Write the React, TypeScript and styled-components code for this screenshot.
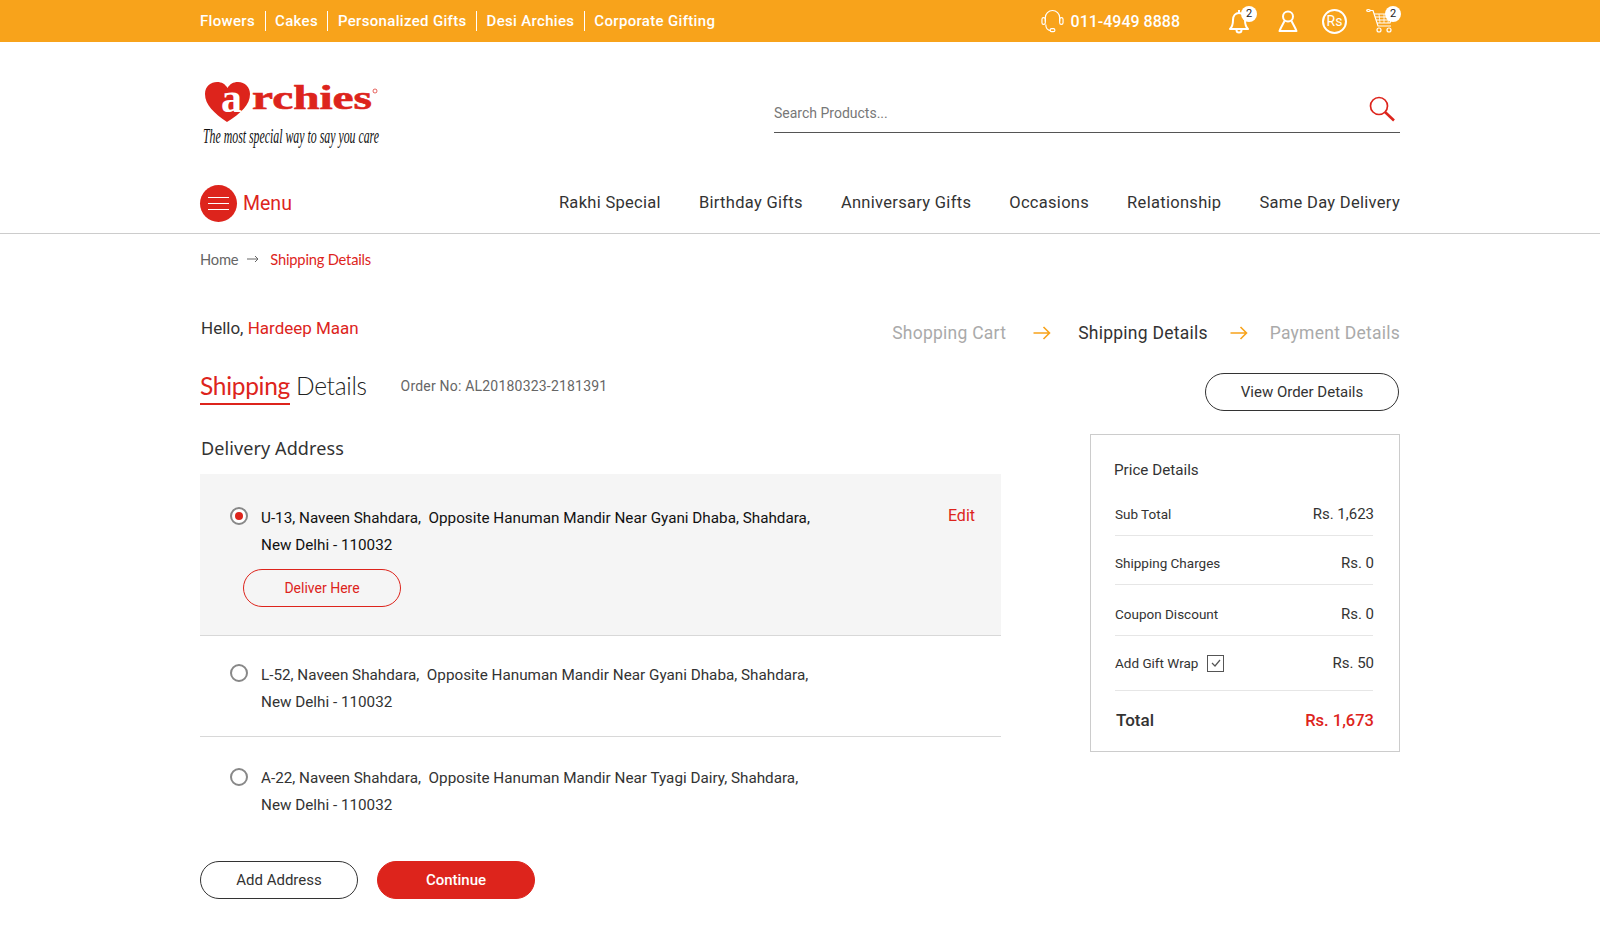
import styled, { createGlobalStyle } from "styled-components";

const red = "#dd241c";
const orange = "#f8a31b";
const dark = "#333333";
const bodyFont = `Roboto, "Noto Sans", sans-serif`;
const labelFont = `"Noto Sans", Roboto, sans-serif`;
const titleFont = `Lato, "Noto Sans", sans-serif`;

const GlobalStyle = createGlobalStyle`
  html, body {
    margin: 0;
    padding: 0;
    background: #fff;
    font-family: ${bodyFont};
    color: ${dark};
  }
  * { box-sizing: border-box; }
`;

const Wrap = styled.div`
  width: 1200px;
  margin: 0 auto;
`;

const TopBar = styled.div`
  height: 42px;
  background: ${orange};
  color: #fff;
`;

const TopInner = styled(Wrap)`
  height: 42px;
  display: flex;
  align-items: center;
`;

const TopLinks = styled.div`
  display: flex;
  align-items: center;
  flex: 1;
`;

const TopLink = styled.a`
  font-size: 15px;
  font-weight: 500;
  letter-spacing: 0.32px;
  line-height: 20px;
  padding: 0 9.500px;
  border-left: 1px solid #fff;
  &:first-child {
    padding-left: 0;
    border-left: 0;
  }
`;

const Phone = styled.div`
  display: flex;
  align-items: center;
  gap: 7px;
  font-size: 16px;
  font-weight: 500;
  margin-right: 48px;
`;

const TopIcons = styled.div`
  display: flex;
  align-items: center;
  margin-right: 6px;
`;

const IconSlot = styled.div<{ $width: number; $gap?: number }>`
  position: relative;
  width: ${(p) => p.$width}px;
  margin-left: ${(p) => p.$gap ?? 0}px;
  height: 28px;
  display: flex;
  align-items: center;
  justify-content: center;
`;

const Badge = styled.span`
  position: absolute;
  top: -1px;
  right: -7px;
  width: 16px;
  height: 16px;
  border-radius: 50%;
  background: #fff;
  color: #222;
  font-size: 11px;
  line-height: 16px;
  text-align: center;
`;

const RsCircle = styled.span`
  width: 25px;
  height: 25px;
  flex: none;
  border: 2px solid #fff;
  border-radius: 50%;
  font-size: 14px;
  line-height: 21px;
  text-align: center;
`;

const HeaderRow = styled(Wrap)`
  display: flex;
  justify-content: space-between;
  align-items: flex-start;
  padding-top: 38px;
  height: 143px;
`;

const LogoSvg = styled.svg`
  overflow: visible;
`;

const SearchBox = styled.div`
  width: 626px;
  height: 42px;
  margin-top: 11px;
  padding: 3px 5px 0 0;
  display: flex;
  align-items: center;
  justify-content: space-between;
  border-bottom: 1px solid #555;
  color: #777;
  font-size: 14px;
  & svg {
    margin-top: -8px;
  }
`;

const NavBorder = styled.div`
  border-bottom: 1px solid #ccc;
  height: 49px;
`;

const NavRow = styled(Wrap)`
  display: flex;
  align-items: flex-start;
  justify-content: space-between;
`;

const MenuButton = styled.div`
  display: flex;
  align-items: center;
  gap: 6px;
  color: ${red};
  font-size: 19.5px;
  font-weight: 400;
`;

const MenuCircle = styled.span`
  width: 37px;
  height: 37px;
  border-radius: 50%;
  background: ${red};
  display: flex;
  flex-direction: column;
  justify-content: center;
  align-items: center;
  gap: 5px;
  & i {
    display: block;
    width: 21px;
    height: 1px;
    background: #fff;
  }
`;

const NavLinks = styled.div`
  display: flex;
  gap: 38px;
  padding-top: 7px;
`;

const NavLink = styled.a`
  font-size: 16.5px;
  font-weight: 400;
  letter-spacing: 0.3px;
  line-height: 22px;
  color: ${dark};
`;

const Crumbs = styled(Wrap)`
  display: flex;
  align-items: center;
  gap: 9px;
  height: 50px;
  margin-bottom: 17px;
  font-family: ${titleFont};
  font-size: 14.7px;
  letter-spacing: -0.2px;
  color: #666;
`;

const CrumbCurrent = styled.span`
  color: ${red};
  margin-left: 2px;
`;

const GreetRow = styled(Wrap)`
  display: flex;
  justify-content: space-between;
  align-items: center;
  height: 58px;
  padding-left: 1px;
`;

const Hello = styled.div`
  font-size: 17px;
  line-height: 24px;
  margin-top: -4px;
  & b {
    font-weight: 400;
    color: ${red};
  }
`;

const Steps = styled.div`
  display: flex;
  align-items: center;
  font-size: 17.5px;
  letter-spacing: 0.25px;
  margin-top: 6px;
`;

const Step = styled.span<{ $active?: boolean }>`
  color: ${(p) => (p.$active ? dark : "#aaa")};
`;

const StepArrow = styled.span<{ $gap: number }>`
  display: flex;
  margin: 0 ${(p) => p.$gap}px;
`;

const TitleRow = styled(Wrap)`
  display: flex;
  align-items: center;
  height: 54px;
`;

const Title = styled.h1`
  margin: 0;
  font-family: ${titleFont};
  font-size: 24.5px;
  font-weight: 300;
  letter-spacing: -0.3px;
  color: #222;
  line-height: 35px;
  & b {
    display: inline-block;
    font-weight: 400;
    color: ${red};
    border-bottom: 2px solid ${red};
    margin-right: 6px;
  }
`;

const OrderNo = styled.span`
  margin-left: 34px;
  font-size: 14px;
  letter-spacing: 0.2px;
  color: #666;
  flex: 1;
`;

const PillButton = styled.button<{ $variant?: "red" | "solid" }>`
  width: 158px;
  height: 38px;
  border-radius: 19px;
  border: 1px solid ${(p) => (p.$variant ? red : dark)};
  background: ${(p) => (p.$variant === "solid" ? red : "transparent")};
  color: ${(p) =>
    p.$variant === "solid" ? "#fff" : p.$variant === "red" ? red : dark};
  font-family: ${bodyFont};
  font-size: ${(p) => (p.$variant === "red" ? "14px" : "15px")};
  font-weight: ${(p) => (p.$variant === "solid" ? 500 : 400)};
  padding: 0;
`;

const WideButton = styled(PillButton)`
  width: 194px;
  margin: 12px 1px 0 0;
`;

const Columns = styled(Wrap)`
  display: flex;
  justify-content: space-between;
  align-items: flex-start;
  padding-top: 21px;
`;

const LeftCol = styled.div`
  width: 801px;
`;

const SectionLabel = styled.div`
  font-family: ${labelFont};
  font-size: 18px;
  letter-spacing: 0.1px;
  line-height: 32px;
  height: 32px;
  margin: -2px 0 10px;
  padding-left: 1px;
  color: ${dark};
`;

const AddressRow = styled.div<{ $selected?: boolean; $height: number; $top: number; $last?: boolean }>`
  position: relative;
  height: ${(p) => p.$height}px;
  padding: ${(p) => p.$top}px 0 0 61px;
  background: ${(p) => (p.$selected ? "#f5f5f5" : "transparent")};
  border-bottom: ${(p) => (p.$last ? "0" : "1px solid #d8d8d8")};
  color: ${(p) => (p.$selected ? "#111" : dark)};
`;

const AddressText = styled.div`
  font-size: 15.25px;
  line-height: 27px;
  white-space: pre;
`;

const Radio = styled.span<{ $on?: boolean; $top: number }>`
  position: absolute;
  left: 30px;
  top: ${(p) => p.$top}px;
  width: 18px;
  height: 18px;
  border: 2px solid #888;
  border-radius: 50%;
  background: #fff;
  display: flex;
  align-items: center;
  justify-content: center;
  &::after {
    content: "";
    display: ${(p) => (p.$on ? "block" : "none")};
    width: 8px;
    height: 8px;
    border-radius: 50%;
    background: ${red};
  }
`;

const EditLink = styled.a`
  position: absolute;
  right: 26px;
  top: 31px;
  color: ${red};
  font-size: 16px;
  line-height: 22px;
`;

const DeliverWrap = styled.div`
  margin: 10px 0 0 -18px;
`;

const BottomButtons = styled.div`
  display: flex;
  gap: 19px;
  margin-top: 23px;
`;

const PriceBox = styled.div`
  width: 310px;
  height: 318px;
  border: 1px solid #ccc;
  padding: 21px 26px 0 23px;
`;

const PriceTitle = styled.div`
  font-size: 15.2px;
  line-height: 28px;
  margin-bottom: 2px;
  color: ${dark};
`;

const PriceRow = styled.div<{ $height: number; $pad?: number }>`
  display: flex;
  justify-content: space-between;
  align-items: center;
  height: ${(p) => p.$height}px;
  padding-top: ${(p) => p.$pad ?? 0}px;
  border-bottom: 1px solid #e6e6e6;
  margin-left: 1px;
  font-size: 13.5px;
  color: ${dark};
  & > b {
    font-size: 15px;
    font-weight: 400;
    margin-right: -1px;
  }
`;

const TotalRow = styled.div`
  display: flex;
  justify-content: space-between;
  align-items: center;
  height: 58px;
  margin-left: 2px;
  font-size: 17px;
  font-weight: 500;
  color: ${dark};
  & b {
    font-size: 16.5px;
    font-weight: 500;
    color: ${red};
    margin-right: -1px;
  }
`;

const GiftLabel = styled.span`
  display: flex;
  align-items: center;
  gap: 9px;
`;

const CheckBox = styled.span`
  width: 17px;
  height: 17px;
  border: 1px solid #555;
  display: flex;
  align-items: center;
  justify-content: center;
`;

const Arrow = () => (
  <svg width="18" height="14" viewBox="0 0 18 14" fill="none" stroke={orange} strokeWidth="1.6">
    <path d="M0.5 7H16.5M10.5 1L16.5 7L10.5 13" />
  </svg>
);

const Logo = () => (
  <LogoSvg width="180" height="76" viewBox="0 0 180 76">
    <path
      d="M27 42 C14 33 5 25 5 14 C5 6 11 2 17 2 C22 2 25 4 27.500 8 C30 4 33 2 38 2 C45 2 50 7 50 14 C50 25 41 33 27 42 Z"
      fill={red}
    />
    <text x="21" y="32" fontFamily="'Liberation Serif', serif" fontWeight="700" fontSize="42" fill="#fff">a</text>
    <text x="52" y="29" fontFamily="'Liberation Serif', serif" fontWeight="700" fontSize="33" fill={red} stroke={red} strokeWidth="0.6" textLength="120" lengthAdjust="spacingAndGlyphs">rchies</text>
    <circle cx="175" cy="11" r="2" fill="none" stroke={red} strokeWidth="0.7" />
    <text x="3" y="63" fontFamily="'Liberation Serif', serif" fontStyle="italic" fontSize="20" fill="#111" textLength="176" lengthAdjust="spacingAndGlyphs">The most special way to say you care</text>
  </LogoSvg>
);

const Headset = () => (
  <svg width="23" height="25" viewBox="0 0 24 26" fill="none" stroke="#fff" strokeWidth="1.2">
    <path d="M4.500 13V9a7.500 7.500 0 0 1 15 0v4" />
    <rect x="1" y="9" width="3.500" height="7" rx="1.700" />
    <rect x="19.500" y="9" width="3.500" height="7" rx="1.700" />
    <path d="M5 16c0 4 2 6 5 6.500" />
    <rect x="9.500" y="20.500" width="5" height="3" rx="1.500" />
  </svg>
);

const Bell = () => (
  <svg width="22" height="26" viewBox="0 0 22 26" fill="none" stroke="#fff" strokeWidth="2">
    <path d="M2 21c2-2 3-4 3-9 0-4 2.500-7 6-7s6 3 6 7c0 5 1 7 3 9Z" strokeLinejoin="round" />
    <path d="M8.500 22a2.500 2.500 0 0 0 5 0" />
    <path d="M11 2v3" />
  </svg>
);

const User = () => (
  <svg width="20" height="24" viewBox="0 0 20 24" fill="none" stroke="#fff" strokeWidth="2">
    <circle cx="10" cy="7.500" r="5" />
    <path d="M6.500 12C5 15 3 18 1.500 22H18.500C17 18 15 15 13.500 12" strokeLinejoin="round" />
  </svg>
);

const Cart = () => (
  <svg width="28" height="26" viewBox="0 0 28 26" fill="none" stroke="#fff" strokeWidth="1.2">
    <ellipse cx="2.500" cy="2.500" rx="1.800" ry="1" />
    <path d="M4 2.500h3l5 15.500h13" />
    <path d="M8 6h19l-3 9H11M9 9h17M10 12h15" />
    <path d="M13 6l1 9M18 6v9M23 6l-1 9" strokeWidth="0.8" />
    <circle cx="13" cy="22" r="2" />
    <circle cx="23" cy="22" r="2" />
  </svg>
);

const SearchIcon = () => (
  <svg width="26" height="26" viewBox="0 0 26 26" fill="none" stroke={red}>
    <circle cx="10" cy="10" r="8.500" strokeWidth="1.700" />
    <path d="M16 16L25 24.500" strokeWidth="2.600" />
  </svg>
);

const SmallArrow = () => (
  <svg width="12" height="8" viewBox="0 0 12 8" fill="none" stroke="#666" strokeWidth="1">
    <path d="M0 4H11M8 1L11 4L8 7" />
  </svg>
);

const App = () => {
  return (
    <>
      <GlobalStyle />
      <TopBar>
        <TopInner>
          <TopLinks>
            <TopLink>Flowers</TopLink>
            <TopLink>Cakes</TopLink>
            <TopLink>Personalized Gifts</TopLink>
            <TopLink>Desi Archies</TopLink>
            <TopLink>Corporate Gifting</TopLink>
          </TopLinks>
          <Phone>
            <Headset />
            011-4949 8888
          </Phone>
          <TopIcons>
            <IconSlot $width={22}>
              <Bell />
              <Badge>2</Badge>
            </IconSlot>
            <IconSlot $width={20} $gap={28}>
              <User />
            </IconSlot>
            <IconSlot $width={25} $gap={24}>
              <RsCircle>Rs</RsCircle>
            </IconSlot>
            <IconSlot $width={28} $gap={19}>
              <Cart />
              <Badge>2</Badge>
            </IconSlot>
          </TopIcons>
        </TopInner>
      </TopBar>

      <HeaderRow>
        <Logo />
        <SearchBox>
          Search Products...
          <SearchIcon />
        </SearchBox>
      </HeaderRow>

      <NavBorder>
        <NavRow>
          <MenuButton>
            <MenuCircle>
              <i />
              <i />
              <i />
            </MenuCircle>
            Menu
          </MenuButton>
          <NavLinks>
            <NavLink>Rakhi Special</NavLink>
            <NavLink>Birthday Gifts</NavLink>
            <NavLink>Anniversary Gifts</NavLink>
            <NavLink>Occasions</NavLink>
            <NavLink>Relationship</NavLink>
            <NavLink>Same Day Delivery</NavLink>
          </NavLinks>
        </NavRow>
      </NavBorder>

      <Crumbs>
        Home
        <SmallArrow />
        <CrumbCurrent>Shipping Details</CrumbCurrent>
      </Crumbs>

      <GreetRow>
        <Hello>
          Hello, <b>Hardeep Maan</b>
        </Hello>
        <Steps>
          <Step>Shopping Cart</Step>
          <StepArrow $gap={27}>
            <Arrow />
          </StepArrow>
          <Step $active>Shipping Details</Step>
          <StepArrow $gap={22}>
            <Arrow />
          </StepArrow>
          <Step>Payment Details</Step>
        </Steps>
      </GreetRow>

      <TitleRow>
        <Title>
          <b>Shipping</b>Details
        </Title>
        <OrderNo>Order No: AL20180323-2181391</OrderNo>
        <WideButton>View Order Details</WideButton>
      </TitleRow>

      <Columns>
        <LeftCol>
          <SectionLabel>Delivery Address</SectionLabel>
          <AddressRow $selected $height={162} $top={31}>
            <Radio $on $top={33} />
            <AddressText>
              {"U-13, Naveen Shahdara,  Opposite Hanuman Mandir Near Gyani Dhaba, Shahdara,\nNew Delhi - 110032"}
            </AddressText>
            <EditLink>Edit</EditLink>
            <DeliverWrap>
              <PillButton $variant="red">Deliver Here</PillButton>
            </DeliverWrap>
          </AddressRow>
          <AddressRow $height={101} $top={26}>
            <Radio $top={28} />
            <AddressText>
              {"L-52, Naveen Shahdara,  Opposite Hanuman Mandir Near Gyani Dhaba, Shahdara,\nNew Delhi - 110032"}
            </AddressText>
          </AddressRow>
          <AddressRow $height={101} $top={28} $last>
            <Radio $top={31} />
            <AddressText>
              {"A-22, Naveen Shahdara,  Opposite Hanuman Mandir Near Tyagi Dairy, Shahdara,\nNew Delhi - 110032"}
            </AddressText>
          </AddressRow>
          <BottomButtons>
            <PillButton>Add Address</PillButton>
            <PillButton $variant="solid">Continue</PillButton>
          </BottomButtons>
        </LeftCol>

        <PriceBox>
          <PriceTitle>Price Details</PriceTitle>
          <PriceRow $height={50} $pad={6}>
            Sub Total <b>Rs. 1,623</b>
          </PriceRow>
          <PriceRow $height={49} $pad={6}>
            Shipping Charges <b>Rs. 0</b>
          </PriceRow>
          <PriceRow $height={51} $pad={8}>
            Coupon Discount <b>Rs. 0</b>
          </PriceRow>
          <PriceRow $height={55}>
            <GiftLabel>
              Add Gift Wrap
              <CheckBox>
                <svg width="10" height="8" viewBox="0 0 10 8" fill="none" stroke="#555" strokeWidth="1.2">
                  <path d="M1 4L4 7L9 1" />
                </svg>
              </CheckBox>
            </GiftLabel>
            <b>Rs. 50</b>
          </PriceRow>
          <TotalRow>
            Total <b>Rs. 1,673</b>
          </TotalRow>
        </PriceBox>
      </Columns>
    </>
  );
};

export default App;
